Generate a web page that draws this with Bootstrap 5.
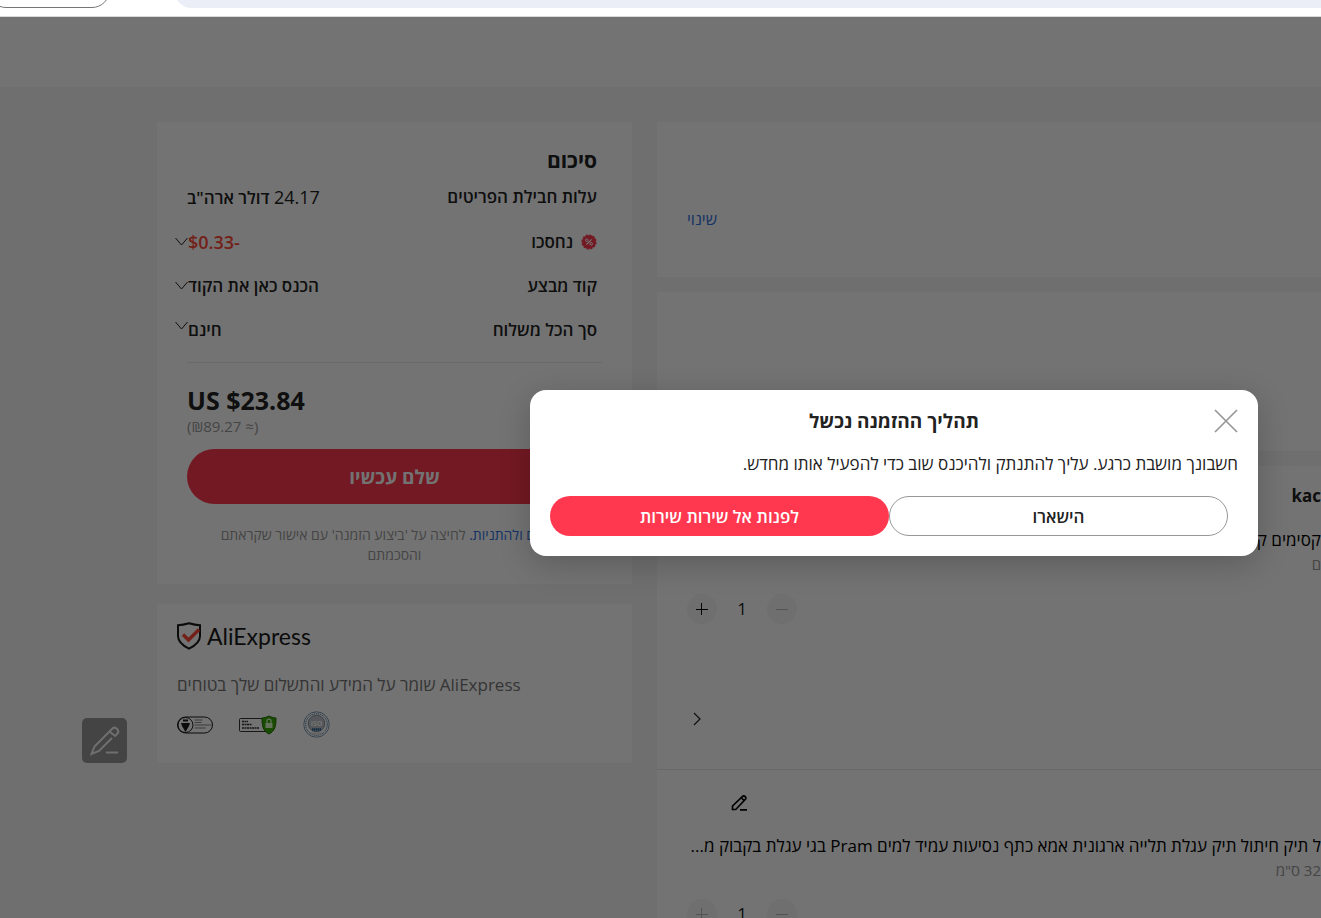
<!DOCTYPE html>
<html lang="he">
<head>
<meta charset="utf-8">
<meta name="viewport" content="width=device-width, initial-scale=1">
<title>AliExpress</title>
<link rel="stylesheet" href="https://cdn.jsdelivr.net/npm/bootstrap@5.3.0/dist/css/bootstrap.min.css">
<style>
  body { font-family: "Open Sans", "Noto Sans", sans-serif; color: #222; background: #f5f5f5; font-size: 16px; line-height: 24px; }
  svg { display: block; flex: none; }
  a { color: #2e6fe0; text-decoration: none; }
  .browser-bar { height: 17px; padding-bottom: 8px; border-bottom: 1px solid #d9d9d9; background: #fff; }
  .tab-pill { width: 122px; height: 36px; margin-left: -12px; border: 1px solid #747775; border-radius: 20px; background: #fff; }
  .address { height: 36px; margin-left: 64px; border: 0; border-radius: 20px 0 0 20px; background: #ebeef7; }
  .site-head { height: 70px; background: #fff; }
  .checkout { padding: 35px 0 0 157px; gap: 25px; }
  .summary { width: 475px; gap: 20px; }
  .panel { background: #fff; }
  .totals { padding: 24px 30px 19px; }
  .totals h2 { font-size: 21px; line-height: 28px; font-weight: 700; padding-right: 5px; margin: 0; }
  .sum-row { height: 44px; padding-right: 5px; margin-left: -12px; font-size: 17px; font-weight: 600; }
  .sum-row.first { height: 46px; }
  .plain-num { margin-left: 12px; font-weight: 500; }
  .plain-num span, .saved { font-size: 18px; }
  .drop { background: none; border: 0; padding: 0; }
  .saved { color: #ff4a37; }
  .rule { border-top: 1px solid #e9e9e9; margin-top: 10px; }
  .price { font-size: 25px; line-height: 32px; font-weight: 700; margin-top: 21px; }
  .approx { font-size: 15px; line-height: 20px; color: #999; }
  .pill-red { background: #ff384f; color: #fff; border: 0; border-radius: 40px; font-weight: 700; }
  .pay { height: 55px; margin-top: 13px; font-size: 19px; }
  .terms { font-size: 14px; line-height: 20px; color: #999; padding: 21px 24px 0; }
  .trust { height: 159px; padding: 17px 20px; }
  .wordmark { font-family: "Lato", sans-serif; font-size: 23px; line-height: 30px; color: #191919; }
  .trust p { font-size: 17px; line-height: 24px; color: #757575; margin: 22px 0 14px; }
  .seals { gap: 26px; }
  .orders { gap: 15px; min-width: 0; }
  .ship { height: 155px; padding: 85px 30px 0; }
  .pay-method { height: 159px; }
  .item { padding: 0 30px; }
  .item + .item { border-top: 1px solid #e9e9e9; }
  .item-first { height: 303px; }
  .store { font-size: 17px; font-weight: 700; padding-top: 18px; margin-right: -30px; }
  .goods { font-size: 17px; color: #000; white-space: nowrap; margin: 20px -30px 0 0; }
  .sku { font-size: 15px; line-height: 20px; color: #999; white-space: nowrap; margin: 2px -30px 0 0; }
  .item + .item .goods { margin-top: 16px; padding-left: 5px; }
  .item + .item .qty { margin-top: 19px; }
  .qty { gap: 10px; margin-top: 20px; }
  .qty button { width: 30px; height: 30px; padding: 0; border: 0; border-radius: 50%; background: #f5f5f5; display: grid; place-items: center; }
  .qty input { width: 30px; border: 0; padding: 0; background: none; text-align: center; font-size: 17px; color: #222; }
  .go { background: none; border: 0; padding: 0; }
  .more { margin-top: 88px; padding-left: 5px; }
  .edit { padding: 24px 0 0 44px; }
  .fab { left: 82px; top: 718px; width: 45px; height: 45px; border: 0; border-radius: 5px; padding: 0; background: #979797; display: grid; place-items: center; }
  .veil { top: 17px; right: 0; bottom: 0; left: 0; background: rgba(0,0,0,.55); padding: 373px 63px 0 0; }
  .dialog { width: 728px; border-radius: 16px; background: #fff; padding: 18px 20px 20px; box-shadow: 0 8px 32px rgba(0,0,0,.2); }
  .dialog h1 { font-size: 19px; line-height: 26px; font-weight: 700; margin: 0; }
  .dialog p { font-size: 17px; line-height: 24px; margin: 18px 0 20px; }
  .dialog-actions { margin-right: 10px; }
  .dialog-actions button { height: 40px; font-size: 17px; font-weight: 600; padding-top: 3px; }
  .stay { background: #fff; color: #222; border: 1px solid #979797; border-radius: 40px; }
  .shut { background: none; border: 0; padding: 0; }
</style>
</head>
<body class="vh-100 overflow-hidden position-relative">
<div class="browser-bar d-flex align-items-end overflow-hidden">
  <div class="tab-pill flex-shrink-0"></div>
  <div class="address flex-grow-1"></div>
</div>
<header class="site-head"></header>

<main class="checkout d-flex align-items-start">
  <aside class="summary d-flex flex-column flex-shrink-0">
    <section class="panel totals" dir="rtl">
      <h2>סיכום</h2>
      <div class="sum-row first d-flex align-items-center justify-content-between"><span>עלות חבילת הפריטים</span><span class="plain-num"><span>24.17</span> <b class="fw-semibold">דולר ארה"ב</b></span></div>
      <div class="sum-row d-flex align-items-center justify-content-between">
        <span class="d-flex align-items-center gap-2">
          <svg width="16" height="16" viewBox="0 0 16 16"><circle cx="8" cy="8" r="6.8" fill="#ff384f"/><circle cx="8" cy="8" r="6.9" fill="none" stroke="#ff384f" stroke-width="1.4" stroke-dasharray="2.4 1.2"/><path d="M10.6 5.4 5.4 10.6" stroke="#fff" stroke-width="1.2"/><circle cx="5.800" cy="6.2" r="1.3" fill="none" stroke="#fff"/><circle cx="10.200" cy="9.8" r="1.3" fill="none" stroke="#fff"/></svg>
          נחסכו</span>
        <span class="d-flex align-items-center"><span class="saved" dir="ltr">$0.33-</span><button class="drop" aria-label="פרטים"><svg width="13" height="8" viewBox="0 0 13 8" fill="none" stroke="#222"><path d="m.5 0 6 7 6-7"/></svg></button></span>
      </div>
      <div class="sum-row d-flex align-items-center justify-content-between">
        <span>קוד מבצע</span>
        <span class="d-flex align-items-center"><span>הכנס כאן את הקוד</span><button class="drop" aria-label="קוד"><svg width="13" height="8" viewBox="0 0 13 8" fill="none" stroke="#222"><path d="m.5 0 6 7 6-7"/></svg></button></span>
      </div>
      <div class="sum-row d-flex align-items-center justify-content-between">
        <span>סך הכל משלוח</span>
        <span class="d-flex align-items-start"><span>חינם</span><button class="drop mt-1" aria-label="משלוח"><svg width="13" height="8" viewBox="0 0 13 8" fill="none" stroke="#222"><path d="m.5 0 6 7 6-7"/></svg></button></span>
      </div>
      <div class="rule"></div>
      <div class="price" dir="ltr">US $23.84</div>
      <div class="approx text-start" dir="ltr">(₪89.27 ≈)</div>
      <button class="pill-red pay w-100">שלם עכשיו</button>
      <div class="terms text-center"><a href="#">לתנאים ולהתניות.</a> לחיצה על 'ביצוע הזמנה' עם אישור שקראתם<br>והסכמתם</div>
    </section>
    <section class="panel trust">
      <div class="d-flex align-items-center">
        <svg width="30" height="28" viewBox="0 0 30 28" fill="none"><path d="M12 1.2C8.500 2.200 4.700 3 1 3.200V14c0 5.500 4.500 9.500 11 12.700C18.500 23.500 23 19.500 23 14V3.200C19.300 3 15.500 2.200 12 1.200Z" stroke="#191919" stroke-width="2"/><path d="m6 12.500 5.500 5.500L22 7.500" stroke="#ff4a37" stroke-width="3.400"/></svg>
        <span class="wordmark">AliExpress</span>
      </div>
      <p class="text-start"><bdi dir="rtl">AliExpress שומר על המידע והתשלום שלך בטוחים</bdi></p>
      <div class="seals d-flex align-items-center">
        <svg width="36" height="18" viewBox="0 0 36 18" fill="none" stroke="#191919"><rect x=".5" y="1" width="35" height="16" rx="8"/><circle cx="8.500" cy="9" r="7.500"/><path d="M4 7h9l-1 3-3.500 6L5 10Z" fill="#191919" stroke="none"/><path d="M6 4.500h5" stroke-width="2"/><path d="M17.500 4h8M17.500 6.500h7M17.500 9h17M17.500 12h11" stroke="#777" stroke-width=".9"/></svg>
        <svg width="38" height="20" viewBox="0 0 38 20" fill="none"><rect x=".5" y="3.500" width="30" height="13" rx="1" stroke="#333"/><path d="M3 6.500h6M3 9.500h10M3 13h17" stroke="#333" stroke-width="1.400" stroke-dasharray="2 .5"/><path d="M30 1c2 1 5 2 7 2 0 8-1 13-7 16-6-3-7-8-7-16 2 0 5-1 7-2Z" fill="#37a800" stroke="#217000"/><rect x="26.500" y="8" width="7" height="5" fill="#dcf8c8"/><path d="M28 8V6c0-2.500 4-2.500 4 0v2" stroke="#dcf8c8" stroke-width="1.300"/></svg>
        <svg width="27" height="27" viewBox="0 0 27 27" fill="none"><circle cx="13.500" cy="13.500" r="12.700" stroke="#7b9bb5"/><circle cx="13.500" cy="13.500" r="10.800" stroke="#3a6f9c" stroke-dasharray="1.200 .8"/><circle cx="13.500" cy="12.500" r="8.300" fill="#bcc2c8" stroke="#85919b"/><text x="13.500" y="15" text-anchor="middle" font-family="Open Sans" font-size="7" font-weight="700" fill="#fff">ISO</text><path d="M9 18.500h9" stroke="#24629a" stroke-width="2.500" stroke-dasharray="1.500 .5"/><path d="M8 22.500h11" stroke="#ddd" stroke-width="2"/></svg>
      </div>
    </section>
  </aside>

  <section class="orders d-flex flex-column flex-grow-1">
    <div class="panel ship"><a href="#">שינוי</a></div>
    <div class="panel pay-method"></div>
    <div class="panel">
      <article class="item item-first">
        <div class="store text-end">kac</div>
        <div class="goods" dir="rtl">קסימים קט</div>
        <div class="sku" dir="rtl">ם</div>
        <div class="qty d-flex align-items-center">
          <button aria-label="הוסף"><svg width="12" height="12" viewBox="0 0 12 12" stroke="#000"><path d="M0 6.500h12M5.500 0v12"/></svg></button>
          <input value="1" aria-label="כמות">
          <button aria-label="הפחת"><svg width="12" height="12" viewBox="0 0 12 12" stroke="#bbb"><path d="M0 6.500h12"/></svg></button>
        </div>
        <button class="go more" aria-label="עוד"><svg width="10" height="14" viewBox="0 0 10 14" fill="none" stroke="#222" stroke-width="1.200"><path d="m2 1 6 6-6 6"/></svg></button>
      </article>
      <article class="item">
        <button class="go edit" aria-label="ערוך"><svg width="18" height="18" viewBox="0 0 18 18" fill="none" stroke="#000" stroke-width="1.700"><path d="M1.500 15.500v-3.500l9.800-9.300c2-1.800 4.800.8 2.900 2.800l-9.500 10Z"/><path d="m10.500 4 2.500 2.500M9 15.800h7"/></svg></button>
        <div class="goods" dir="rtl">ל תיק חיתול תיק עגלת תלייה ארגונית אמא כתף נסיעות עמיד למים Pram בגי עגלת בקבוק מ...</div>
        <div class="sku" dir="rtl">32 ס"מ</div>
        <div class="qty d-flex align-items-center">
          <button aria-label="הוסף"><svg width="12" height="12" viewBox="0 0 12 12" stroke="#bbb"><path d="M0 6.500h12M5.500 0v12"/></svg></button>
          <input value="1" aria-label="כמות">
          <button aria-label="הפחת"><svg width="12" height="12" viewBox="0 0 12 12" stroke="#bbb"><path d="M0 6.500h12"/></svg></button>
        </div>
      </article>
    </div>
  </section>
</main>

<button class="fab position-absolute" aria-label="משוב"><svg width="32" height="32" viewBox="0 0 32 32" fill="none" stroke="#f5f5f5" stroke-width="2"><path d="M20.500 6.500 5.500 21.500 2.500 29l7.500-3L23 13M20.500 6.500l3-3c3-2.500 7.500 2 5 5L26 11Z"/><path d="M17 27.500h12"/></svg></button>

<div class="veil position-absolute d-flex justify-content-end align-items-start">
  <div class="dialog" role="dialog" aria-modal="true" aria-labelledby="dlg" dir="rtl">
    <div class="d-flex align-items-center">
      <button class="shut" aria-label="סגור"><svg width="24" height="24" viewBox="0 0 24 24" stroke="#979797" stroke-width="1.700"><path d="m1 1 22 22M23 1 1 23"/></svg></button>
      <h1 id="dlg" class="flex-grow-1 text-center">תהליך ההזמנה נכשל</h1>
      <span class="px-2 me-2"></span>
    </div>
    <p>חשבונך מושבת כרגע. עליך להתנתק ולהיכנס שוב כדי להפעיל אותו מחדש.</p>
    <div class="dialog-actions row g-0">
      <div class="col"><button class="stay w-100">הישארו</button></div>
      <div class="col"><button class="pill-red w-100">לפנות אל שירות שירות</button></div>
    </div>
  </div>
</div>
<script src="https://cdn.jsdelivr.net/npm/bootstrap@5.3.0/dist/js/bootstrap.bundle.min.js"></script>
</body>
</html>
